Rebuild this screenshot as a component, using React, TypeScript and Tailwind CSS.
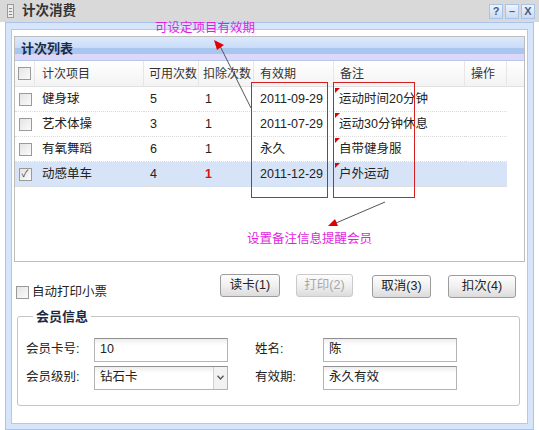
import React from 'react'

type Row = { name: string; avail: string; deduct: string; expiry: string; note: string; checked?: boolean }

const ROWS: Row[] = [
  { name: '健身球', avail: '5', deduct: '1', expiry: '2011-09-29', note: '运动时间20分钟' },
  { name: '艺术体操', avail: '3', deduct: '1', expiry: '2011-07-29', note: '运动30分钟休息' },
  { name: '有氧舞蹈', avail: '6', deduct: '1', expiry: '永久', note: '自带健身服' },
  { name: '动感单车', avail: '4', deduct: '1', expiry: '2011-12-29', note: '户外运动', checked: true },
]

function Check({ checked }: { checked?: boolean }) {
  return (
    <span className="w-[13px] h-[13px] shrink-0 border border-[#9a9a9a] bg-gradient-to-br from-[#e4e4e4] to-[#fbfbfb] flex items-center justify-center text-[10px] leading-none text-[#444]">
      {checked ? '✓' : ''}
    </span>
  )
}

function Btn({ label, disabled, w }: { label: string; disabled?: boolean; w: string }) {
  return (
    <button
      className={`${w} h-[23px] shrink-0 rounded-[3px] border text-[12.5px] whitespace-nowrap bg-gradient-to-b from-[#fdfdfd] via-[#f0f0f0] to-[#dcdcdc] ${disabled ? 'border-[#cacaca] text-[#a8a8a8]' : 'border-[#9c9c9c] text-[#222]'}`}
    >
      {label}
    </button>
  )
}

function Field({ value, select }: { value: string; select?: boolean }) {
  return (
    <div className="w-[134px] h-[24px] border border-[#b4b4b4] border-t-[#8f8f8f] bg-gradient-to-b from-[#eeeeee] to-white to-[30%] flex items-center">
      <span className="flex-1 pl-[5px] text-[12.5px] text-[#222]">{value}</span>
      {select && (
        <span className="w-[14px] h-full border-l border-[#d0d0d0] bg-[#f2f2f2] flex items-center justify-center">
          <svg width="7" height="5" viewBox="0 0 7 5"><path d="M0.5 0.8 L3.5 4 L6.5 0.8" fill="none" stroke="#555" strokeWidth="1.3" /></svg>
        </span>
      )}
    </div>
  )
}

export default function App() {
  const cols = 'grid grid-cols-[20px_109px_55px_55px_80px_131px_42px_20px]'
  const cell = 'flex items-center whitespace-nowrap border-b border-dotted border-[#dcdcdc]'
  return (
    <div className="relative w-[539px] h-[430px] overflow-hidden bg-white font-['Liberation_Sans','Noto_Sans_CJK_SC',sans-serif] text-[#222]">
      {/* title bar */}
      <div className="h-[22px] bg-[#d9d9d9] flex items-center pl-[7px] pr-[4px]">
        <span className="w-[7px] h-[14px] border border-[#9a9a9a] bg-[#ececec] flex flex-col justify-center gap-[2px] px-[1px]">
          <span className="h-px bg-[#888]" />
          <span className="h-px bg-[#888]" />
          <span className="h-px bg-[#888]" />
        </span>
        <span className="ml-[8px] text-[13.5px] font-bold text-[#333]">计次消费</span>
        <div className="ml-auto flex gap-[2px]">
          {['?', '–', 'X'].map(c => (
            <span key={c} className="w-[14px] h-[15px] border border-[#a9c3e6] bg-gradient-to-b from-[#eef4fd] to-[#c9dbf4] flex items-center justify-center text-[11px] font-bold text-[#4a5f80] leading-none">
              {c}
            </span>
          ))}
        </div>
      </div>

      {/* frame */}
      <div className="h-[408px] mx-[5px] border border-[#aac4ea] bg-[#d6e5f9] px-[5px] pt-[6px] pb-[5px]">
        <div className="h-full bg-white border border-[#b3c9ea] px-[2px] pt-[6px] flex flex-col">
          {/* grid */}
          <div className="h-[226px] border border-[#bdbdbd] flex flex-col">
            <div className="h-[24px] flex flex-col border-b border-[#b9c8e6]">
              <div className="h-[11px] bg-gradient-to-b from-[#dce9fc] to-[#c9dcf8] relative">
                <span className="absolute left-[6px] top-[5px] text-[13px] font-bold text-[#1d2a44] leading-none">计次列表</span>
              </div>
              <div className="h-[6px] bg-[#a9c6ee]" />
              <div className="flex-1 bg-[#dcd8fa]" />
            </div>
            <div className={`${cols} h-[26px] bg-gradient-to-b from-white to-[#f3f3f3] border-b border-[#e2e2e2] text-[12px] text-[#333] whitespace-nowrap`}>
              <div className="flex items-center justify-center border-r border-[#e6e6e6]"><Check /></div>
              <div className="flex items-center pl-[7px] border-r border-[#e6e6e6]">计次项目</div>
              <div className="flex items-center pl-[5px] border-r border-[#e6e6e6]">可用次数</div>
              <div className="flex items-center pl-[4px] border-r border-[#e6e6e6]">扣除次数</div>
              <div className="flex items-center pl-[6px] border-r border-[#e6e6e6]">有效期</div>
              <div className="flex items-center pl-[6px] border-r border-[#e6e6e6]">备注</div>
              <div className="flex items-center pl-[6px] border-r border-[#e6e6e6]">操作</div>
              <div />
            </div>
            {ROWS.map(r => {
              const bg = r.checked ? 'bg-[#d7e4f7]' : ''
              return (
                <div key={r.name} className={`${cols} h-[25px] text-[12.5px]`}>
                  <div className={`${cell} justify-center ${bg}`}><Check checked={r.checked} /></div>
                  <div className={`${cell} pl-[7px] ${bg}`}>{r.name}</div>
                  <div className={`${cell} pl-[6px] ${bg}`}>{r.avail}</div>
                  <div className={`${cell} pl-[6px] ${bg} ${r.checked ? 'text-[#e01010] font-bold' : ''}`}>{r.deduct}</div>
                  <div className={`${cell} pl-[6px] ${bg}`}>{r.expiry}</div>
                  <div className={`${cell} relative pl-[5px] ${bg}`}>
                    <span className="absolute left-[1px] top-[1px] w-0 h-0 border-t-[5px] border-r-[5px] border-t-[#e00000] border-r-transparent" />
                    {r.note}
                  </div>
                  <div className={`border-b border-dotted border-[#dcdcdc] ${bg}`} />
                  <div />
                </div>
              )
            })}
          </div>

          {/* controls */}
          <div className="h-[23px] mt-[12px] flex items-center">
            <div className="w-[206px] shrink-0 flex items-center gap-[3px] pl-[2px] mt-[14px] whitespace-nowrap">
              <Check />
              <span className="text-[12.5px]">自动打印小票</span>
            </div>
            <div className="flex gap-[16px]">
              <Btn label="读卡(1)" w="w-[60px]" />
              <Btn label="打印(2)" disabled w="w-[57px]" />
            </div>
            <div className="ml-[19px]">
              <Btn label="取消(3)" w="w-[59px]" />
            </div>
            <div className="ml-[17px]">
              <Btn label="扣次(4)" w="w-[68px]" />
            </div>
          </div>

          {/* member info */}
          <fieldset className="mt-[10px] ml-[3px] w-[503px] h-[99px] border border-[#c4c4c4] rounded-[3px] px-[8px] pt-[11px]">
            <legend className="ml-[7px] px-[3px] text-[13px] font-bold text-[#1d2a44]">会员信息</legend>
            <div className="grid grid-cols-[68px_134px_27px_68px_134px] gap-y-[4px] items-center text-[12.5px]">
              <span>会员卡号:</span>
              <Field value="10" />
              <span />
              <span>姓名:</span>
              <Field value="陈" />
              <span>会员级别:</span>
              <Field value="钻石卡" select />
              <span />
              <span>有效期:</span>
              <Field value="永久有效" />
            </div>
          </fieldset>
        </div>
      </div>

      {/* annotations */}
      <div className="absolute left-[251px] top-[82px] w-[77px] h-[116px] border border-[#d42020]" />
      <div className="absolute left-[333px] top-[82px] w-[82px] h-[116px] border border-[#d42020]" />
      <span className="absolute left-[155px] top-[22px] text-[12.5px] text-[#e21fe0] leading-none whitespace-nowrap">可设定项目有效期</span>
      <span className="absolute left-[247px] top-[233px] text-[12.5px] text-[#e21fe0] leading-none whitespace-nowrap">设置备注信息提醒会员</span>
      <svg className="absolute left-0 top-0 pointer-events-none" width="539" height="430">
        <line x1="220" y1="46" x2="251" y2="108" stroke="#555" strokeWidth="1" />
        <polygon points="214,40 224,45 217,50" fill="#e00000" />
        <line x1="385" y1="202" x2="336" y2="223" stroke="#555" strokeWidth="1" />
        <polygon points="328,226 335,219 338,226" fill="#e00000" />
      </svg>
    </div>
  )
}
